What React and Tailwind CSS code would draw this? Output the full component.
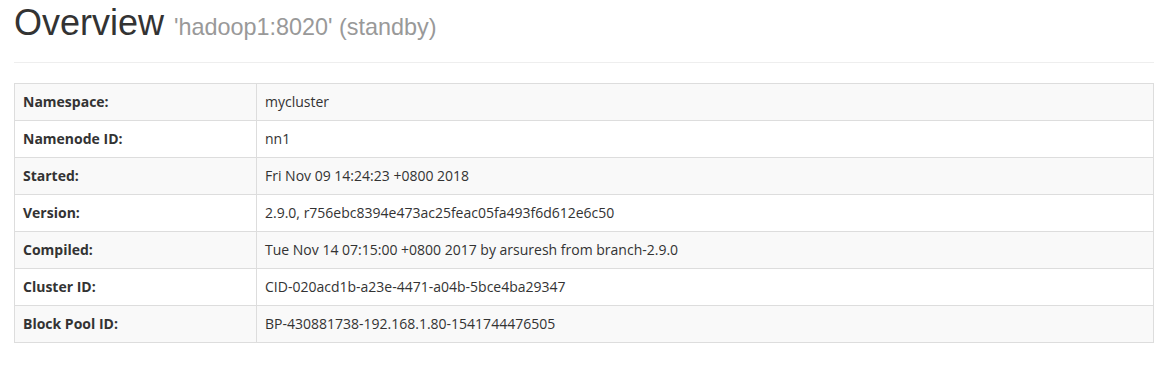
const rows = [
  ["Namespace:", "mycluster"],
  ["Namenode ID:", "nn1"],
  ["Started:", "Fri Nov 09 14:24:23 +0800 2018"],
  ["Version:", "2.9.0, r756ebc8394e473ac25feac05fa493f6d612e6c50"],
  ["Compiled:", "Tue Nov 14 07:15:00 +0800 2017 by arsuresh from branch-2.9.0"],
  ["Cluster ID:", "CID-020acd1b-a23e-4471-a04b-5bce4ba29347"],
  ["Block Pool ID:", "BP-430881738-192.168.1.80-1541744476505"],
];

export default function App() {
  return (
    <div className="w-[1162px] h-[368px] bg-white pl-[14px] pr-[8px] pt-[3px] text-[#333]">
      <div className="pb-[9px] mb-[20px] border-b border-[#eee]">
        <h1 className="text-[36px] leading-[1.1] mb-[10px] font-['Liberation_Sans',Arial,sans-serif]">
          Overview{" "}
          <span className="text-[23.4px] text-[#999]">'hadoop1:8020' (standby)</span>
        </h1>
      </div>
      <table className="w-[1140px] border-collapse border border-[#ddd] text-[14px] leading-[20px] font-['Open_Sans','Noto_Sans',sans-serif]">
        <tbody>
          {rows.map(([label, value], i) => (
            <tr key={label} className={i % 2 === 0 ? "bg-[#f9f9f9]" : "bg-white"}>
              <th className="w-[242px] border border-[#ddd] p-[8px] text-left font-bold">{label}</th>
              <td className="border border-[#ddd] p-[8px]">{value}</td>
            </tr>
          ))}
        </tbody>
      </table>
    </div>
  );
}
